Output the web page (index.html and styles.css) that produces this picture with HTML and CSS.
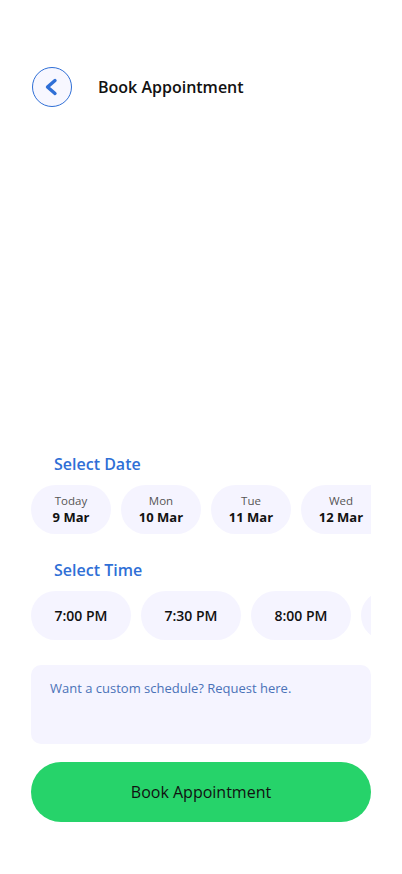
FILE: index.html
```html
<!DOCTYPE html>
<html lang="en">
<head>
<meta charset="utf-8">
<title>Book Appointment</title>
<link rel="stylesheet" href="styles.css">
</head>
<body>
<div class="screen">
  <header class="header">
    <button class="back" aria-label="Back">
      <svg width="20" height="20" viewBox="0 0 20 20"><path d="M13 3.5 L5.5 10 L13 16.5" fill="none" stroke="#2f6fd6" stroke-width="3.4" stroke-linecap="round" stroke-linejoin="round"/></svg>
    </button>
    <h1 class="title">Book Appointment</h1>
  </header>

  <main class="booking">
    <h2 class="label">Select Date</h2>
    <div class="row">
      <div class="chip date"><span class="day">Today</span><span class="num">9 Mar</span></div>
      <div class="chip date"><span class="day">Mon</span><span class="num">10 Mar</span></div>
      <div class="chip date"><span class="day">Tue</span><span class="num">11 Mar</span></div>
      <div class="chip date chip-last"><span class="day">Wed</span><span class="num">12 Mar</span></div>
    </div>

    <h2 class="label time-label">Select Time</h2>
    <div class="row">
      <div class="chip time">7:00 PM</div>
      <div class="chip time">7:30 PM</div>
      <div class="chip time">8:00 PM</div>
      <div class="chip time" aria-hidden="true"></div>
    </div>

    <div class="custom">Want a custom schedule? Request here.</div>

    <button class="book">Book Appointment</button>
  </main>
</div>
</body>
</html>
```

FILE: styles.css
```css
* { box-sizing: border-box; }
html, body { margin: 0; padding: 0; background: #fff; }
body { font-family: "Open Sans", "Noto Sans", sans-serif; color: #111; }

.screen {
  height: 874px;
  display: flex;
  flex-direction: column;
  padding: 67px 31px 52px 32px;
}

.header {
  display: flex;
  align-items: center;
  gap: 26px;
}
.back {
  width: 40px;
  height: 40px;
  border-radius: 50%;
  border: 1px solid #2f6fd6;
  background: #f7f7ff;
  display: flex;
  align-items: center;
  justify-content: center;
  padding: 0;
}
.title {
  margin: 0;
  font-size: 16px;
  font-weight: 600;
  color: #111;
}

.booking {
  margin-top: auto;
  display: flex;
  flex-direction: column;
  margin-left: -1px;
}
.label {
  margin: 0 0 10px 23px;
  font-size: 16px;
  line-height: 22px;
  font-weight: 600;
  color: #2f6fd6;
}
.time-label { margin-top: 25px; }

.row {
  display: flex;
  gap: 10px;
  overflow: hidden;
  width: 340px;
}
.chip {
  flex: 0 0 auto;
  height: 49px;
  border-radius: 25px;
  background: #f5f4ff;
  display: flex;
  align-items: center;
  justify-content: center;
}
.date {
  width: 80px;
  flex-direction: column;
}
.chip-last {
  border-radius: 25px 0 0 25px;
  width: 70px;
  padding-left: 10px;
}
.day {
  font-size: 11.5px;
  line-height: 15px;
  color: #555;
}
.num {
  font-size: 13px;
  line-height: 18px;
  font-weight: 700;
  color: #111;
}
.time {
  width: 100px;
  font-size: 14px;
  font-weight: 600;
  color: #111;
}

.custom {
  margin-top: 25px;
  height: 79px;
  border-radius: 10px;
  background: #f5f4ff;
  padding: 14px 19px;
  font-size: 13px;
  line-height: 18px;
  color: #4a72b8;
}

.book {
  margin-top: 18px;
  height: 60px;
  border: 0;
  border-radius: 30px;
  background: #26d36a;
  font-family: "Open Sans", "Noto Sans", sans-serif;
  font-size: 16px;
  color: #111;
  width: 340px;
}
```
